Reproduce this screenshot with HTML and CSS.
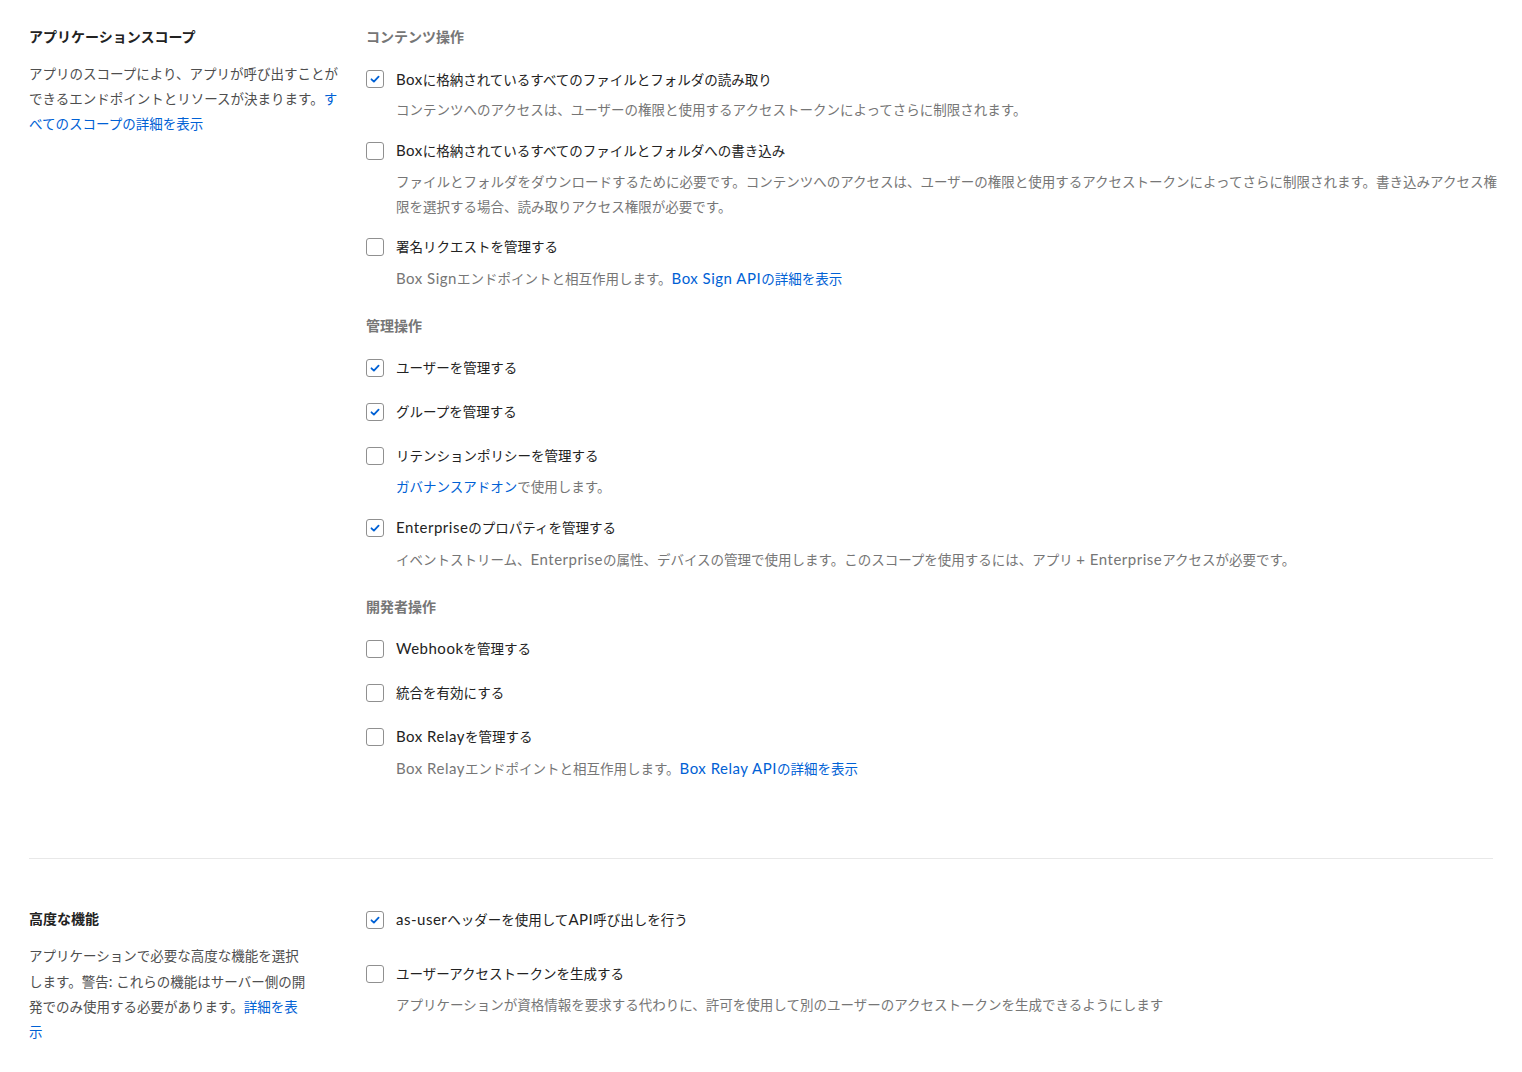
FILE: index.html
```html
<!DOCTYPE html>
<html lang="ja">
<head>
<meta charset="utf-8">
<title>アプリケーションスコープ</title>
<link rel="stylesheet" href="styles.css">
</head>
<body>
<div class="page">
  <section class="section section-scopes">
    <div class="side">
      <h2 class="side-title">アプリケーションスコープ</h2>
      <p class="side-desc">アプリのスコープにより、アプリが呼び出すことが<br>できるエンドポイントとリソースが決まります。<a href="#">す<br>べてのスコープの詳細を表示</a></p>
    </div>
    <div class="main">
      <div class="group">
        <h3 class="group-title">コンテンツ操作</h3>
        <div class="option">
          <label class="option-row"><span class="cb checked"><svg viewBox="0 0 12 12"><path d="M2.5 6.3 L4.9 8.6 L9.6 3.6"/></svg></span><span class="option-label"><span class="en">Box</span>に格納されているすべてのファイルとフォルダの読み取り</span></label>
          <p class="option-desc">コンテンツへのアクセスは、ユーザーの権限と使用するアクセストークンによってさらに制限されます。</p>
        </div>
        <div class="option">
          <label class="option-row"><span class="cb"></span><span class="option-label"><span class="en">Box</span>に格納されているすべてのファイルとフォルダへの書き込み</span></label>
          <p class="option-desc">ファイルとフォルダをダウンロードするために必要です。コンテンツへのアクセスは、ユーザーの権限と使用するアクセストークンによってさらに制限されます。書き込みアクセス権<br>限を選択する場合、読み取りアクセス権限が必要です。</p>
        </div>
        <div class="option">
          <label class="option-row"><span class="cb"></span><span class="option-label">署名リクエストを管理する</span></label>
          <p class="option-desc"><span class="en">Box Sign</span>エンドポイントと相互作用します。<a href="#"><span class="en">Box Sign API</span>の詳細を表示</a></p>
        </div>
      </div>
      <div class="group">
        <h3 class="group-title">管理操作</h3>
        <div class="option">
          <label class="option-row"><span class="cb checked"><svg viewBox="0 0 12 12"><path d="M2.5 6.3 L4.9 8.6 L9.6 3.6"/></svg></span><span class="option-label">ユーザーを管理する</span></label>
        </div>
        <div class="option">
          <label class="option-row"><span class="cb checked"><svg viewBox="0 0 12 12"><path d="M2.5 6.3 L4.9 8.6 L9.6 3.6"/></svg></span><span class="option-label">グループを管理する</span></label>
        </div>
        <div class="option">
          <label class="option-row"><span class="cb"></span><span class="option-label">リテンションポリシーを管理する</span></label>
          <p class="option-desc"><a href="#">ガバナンスアドオン</a>で使用します。</p>
        </div>
        <div class="option">
          <label class="option-row"><span class="cb checked"><svg viewBox="0 0 12 12"><path d="M2.5 6.3 L4.9 8.6 L9.6 3.6"/></svg></span><span class="option-label"><span class="en">Enterprise</span>のプロパティを管理する</span></label>
          <p class="option-desc">イベントストリーム、<span class="en">Enterprise</span>の属性、デバイスの管理で使用します。このスコープを使用するには、アプリ <span class="en">+ Enterprise</span>アクセスが必要です。</p>
        </div>
      </div>
      <div class="group">
        <h3 class="group-title">開発者操作</h3>
        <div class="option">
          <label class="option-row"><span class="cb"></span><span class="option-label"><span class="en">Webhook</span>を管理する</span></label>
        </div>
        <div class="option">
          <label class="option-row"><span class="cb"></span><span class="option-label">統合を有効にする</span></label>
        </div>
        <div class="option">
          <label class="option-row"><span class="cb"></span><span class="option-label"><span class="en">Box Relay</span>を管理する</span></label>
          <p class="option-desc"><span class="en">Box Relay</span>エンドポイントと相互作用します。<a href="#"><span class="en">Box Relay API</span>の詳細を表示</a></p>
        </div>
      </div>
    </div>
  </section>
  <section class="section section-advanced">
    <div class="side">
      <h2 class="side-title">高度な機能</h2>
      <p class="side-desc">アプリケーションで必要な高度な機能を選択<br>します。警告<span class="en">:</span> これらの機能はサーバー側の開<br>発でのみ使用する必要があります。<a href="#">詳細を表<br>示</a></p>
    </div>
    <div class="main">
      <div class="option wide">
        <label class="option-row"><span class="cb checked"><svg viewBox="0 0 12 12"><path d="M2.5 6.3 L4.9 8.6 L9.6 3.6"/></svg></span><span class="option-label"><span class="en">as-user</span>ヘッダーを使用して<span class="en">API</span>呼び出しを行う</span></label>
      </div>
      <div class="option wide">
        <label class="option-row"><span class="cb"></span><span class="option-label">ユーザーアクセストークンを生成する</span></label>
        <p class="option-desc">アプリケーションが資格情報を要求する代わりに、許可を使用して別のユーザーのアクセストークンを生成できるようにします</p>
      </div>
    </div>
  </section>
</div>
</body>
</html>
```

FILE: styles.css
```css
* { box-sizing: border-box; }

html, body {
  margin: 0;
  padding: 0;
  background: #ffffff;
}

body {
  font-family: "Lato", "Noto Sans CJK JP", sans-serif;
  font-size: 13.5px;
  color: #222222;
}

a {
  color: #0061d5;
  text-decoration: none;
}

p, h2, h3 { margin: 0; }

.en {
  font-size: 15px;
  letter-spacing: 0.5px;
}

.page {
  padding: 0 29px;
}

.section {
  display: grid;
  grid-template-columns: 337px 1fr;
}

.section-scopes {
  padding-top: 27px;
  padding-bottom: 76px;
  border-bottom: 1px solid #e8e8e8;
}

.section-advanced {
  padding-top: 51px;
}

.side {
  width: 320px;
}

.side-title {
  font-size: 14px;
  line-height: 20px;
  font-weight: 700;
  color: #222222;
}

.section-advanced .side-title {
  margin-top: -1px;
}

.side-desc {
  margin-top: 14.5px;
  line-height: 25px;
  color: #4e4e4e;
}

.section-advanced .side-desc {
  margin-top: 15.5px;
}

.group + .group {
  margin-top: 9px;
}

.group-title {
  font-size: 14px;
  line-height: 20px;
  font-weight: 700;
  color: #767676;
  margin-bottom: 22px;
}

.option {
  margin-bottom: 24px;
}

.group:last-child .option:last-child,
.section-advanced .option:last-child {
  margin-bottom: 0;
}

.option.wide {
  margin-bottom: 34px;
}

.option-row {
  display: flex;
  align-items: center;
  height: 20px;
  cursor: pointer;
}

.cb {
  flex: none;
  width: 18px;
  height: 18px;
  border: 1px solid #909090;
  border-radius: 3px;
  background: #ffffff;
  display: flex;
  align-items: center;
  justify-content: center;
  margin-right: 12px;
}

.cb svg {
  width: 12px;
  height: 12px;
  fill: none;
  stroke: #0061d5;
  stroke-width: 1.8;
  stroke-linecap: round;
  stroke-linejoin: round;
}

.option-label {
  line-height: 20px;
  color: #222222;
}

.option-desc {
  margin: 9px -12px -6.5px 30px;
  line-height: 25px;
  color: #767676;
}

.option:last-child .option-desc {
  margin-bottom: 0;
}
```
